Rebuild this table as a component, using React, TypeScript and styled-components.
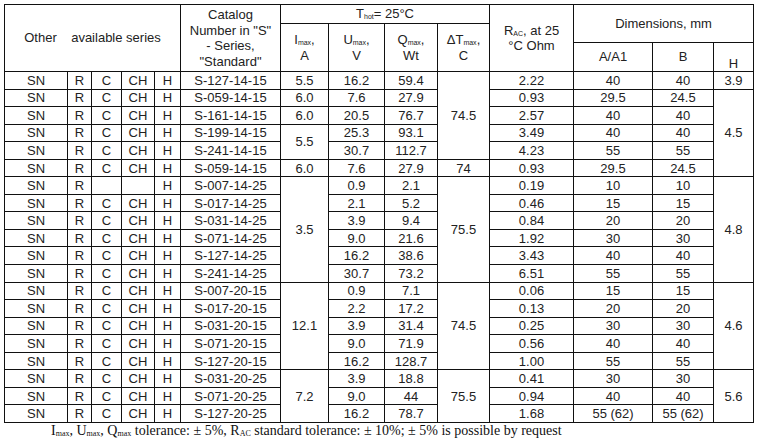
import React from 'react';
import styled, { createGlobalStyle } from 'styled-components';

type Span = [string, number] | null;

interface Row {
  series: [string, string, string, string, string];
  cat: string;
  i: Span;
  u: string;
  q: string;
  dt: Span;
  r: string;
  a: string;
  b: string;
  h: Span;
}

const full: Row['series'] = ['SN', 'R', 'C', 'CH', 'H'];

const rows: Row[] = [
  { series: full, cat: 'S-127-14-15', i: ['5.5', 1], u: '16.2', q: '59.4', dt: ['74.5', 5], r: '2.22', a: '40', b: '40', h: ['3.9', 1] },
  { series: full, cat: 'S-059-14-15', i: ['6.0', 1], u: '7.6', q: '27.9', dt: null, r: '0.93', a: '29.5', b: '24.5', h: ['4.5', 5] },
  { series: full, cat: 'S-161-14-15', i: ['6.0', 1], u: '20.5', q: '76.7', dt: null, r: '2.57', a: '40', b: '40', h: null },
  { series: full, cat: 'S-199-14-15', i: ['5.5', 2], u: '25.3', q: '93.1', dt: null, r: '3.49', a: '40', b: '40', h: null },
  { series: full, cat: 'S-241-14-15', i: null, u: '30.7', q: '112.7', dt: null, r: '4.23', a: '55', b: '55', h: null },
  { series: full, cat: 'S-059-14-15', i: ['6.0', 1], u: '7.6', q: '27.9', dt: ['74', 1], r: '0.93', a: '29.5', b: '24.5', h: null },
  { series: ['SN', 'R', '', '', 'H'], cat: 'S-007-14-25', i: ['3.5', 6], u: '0.9', q: '2.1', dt: ['75.5', 6], r: '0.19', a: '10', b: '10', h: ['4.8', 6] },
  { series: full, cat: 'S-017-14-25', i: null, u: '2.1', q: '5.2', dt: null, r: '0.46', a: '15', b: '15', h: null },
  { series: full, cat: 'S-031-14-25', i: null, u: '3.9', q: '9.4', dt: null, r: '0.84', a: '20', b: '20', h: null },
  { series: full, cat: 'S-071-14-25', i: null, u: '9.0', q: '21.6', dt: null, r: '1.92', a: '30', b: '30', h: null },
  { series: full, cat: 'S-127-14-25', i: null, u: '16.2', q: '38.6', dt: null, r: '3.43', a: '40', b: '40', h: null },
  { series: full, cat: 'S-241-14-25', i: null, u: '30.7', q: '73.2', dt: null, r: '6.51', a: '55', b: '55', h: null },
  { series: full, cat: 'S-007-20-15', i: ['12.1', 5], u: '0.9', q: '7.1', dt: ['74.5', 5], r: '0.06', a: '15', b: '15', h: ['4.6', 5] },
  { series: full, cat: 'S-017-20-15', i: null, u: '2.2', q: '17.2', dt: null, r: '0.13', a: '20', b: '20', h: null },
  { series: full, cat: 'S-031-20-15', i: null, u: '3.9', q: '31.4', dt: null, r: '0.25', a: '30', b: '30', h: null },
  { series: full, cat: 'S-071-20-15', i: null, u: '9.0', q: '71.9', dt: null, r: '0.56', a: '40', b: '40', h: null },
  { series: full, cat: 'S-127-20-15', i: null, u: '16.2', q: '128.7', dt: null, r: '1.00', a: '55', b: '55', h: null },
  { series: full, cat: 'S-031-20-25', i: ['7.2', 3], u: '3.9', q: '18.8', dt: ['75.5', 3], r: '0.41', a: '30', b: '30', h: ['5.6', 3] },
  { series: full, cat: 'S-071-20-25', i: null, u: '9.0', q: '44', dt: null, r: '0.94', a: '40', b: '40', h: null },
  { series: full, cat: 'S-127-20-25', i: null, u: '16.2', q: '78.7', dt: null, r: '1.68', a: '55 (62)', b: '55 (62)', h: null },
];

const widths = [63, 24, 30, 33, 26, 100, 48, 56, 53, 52, 84, 79, 61, 40];

const GlobalStyle = createGlobalStyle`
  body {
    margin: 0;
    background: #fff;
  }
`;

const Page = styled.div`
  padding: 4px 0 0 4px;
  width: 757px;
  height: 439px;
  box-sizing: border-box;
  overflow: hidden;
`;

const Table = styled.table`
  border-collapse: collapse;
  table-layout: fixed;
  width: 749px;
  font-family: 'Liberation Sans', Arial, sans-serif;
  font-size: 13px;
  color: #222;
`;

const HeadRow = styled.tr<{ $h: number }>`
  height: ${(p) => p.$h}px;
`;

const Head = styled.th<{ $align?: 'middle' | 'bottom' }>`
  border: 1px solid #111;
  padding: 0;
  font-weight: normal;
  line-height: 15.5px;
  text-align: center;
  vertical-align: ${(p) => p.$align ?? 'middle'};
  white-space: pre;
`;

const Sub = styled.sub`
  font-size: 7px;
  vertical-align: -1px;
  line-height: 0;
`;

const DataRow = styled.tr`
  height: 17.55px;
`;

const Cell = styled.td`
  border: 1px solid #111;
  padding: 0;
  line-height: 15px;
  text-align: center;
  vertical-align: middle;
  white-space: nowrap;
`;

const Note = styled.p`
  margin: 0 0 0 47px;
  font-family: 'Liberation Serif', 'Times New Roman', serif;
  font-size: 14px;
  color: #111;
  line-height: 16px;
  white-space: nowrap;
`;

const NoteSub = styled.sub`
  font-size: 8px;
  vertical-align: -1px;
  line-height: 0;
`;

const SpanCell: React.FC<{ v: Span }> = ({ v }) =>
  v ? <Cell rowSpan={v[1]}>{v[0]}</Cell> : null;

const App: React.FC = () => {
  return (
    <Page>
      <GlobalStyle />
      <Table>
        <colgroup>
          {widths.map((w, i) => (
            <col key={i} style={{ width: w }} />
          ))}
        </colgroup>
        <thead>
          <HeadRow $h={19}>
            <Head colSpan={5} rowSpan={3}>
              {'Other    available series'}
            </Head>
            <Head rowSpan={3}>
              {'Catalog\nNumber in "S"\n- Series,\n"Standard"'}
            </Head>
            <Head colSpan={4}>
              T<Sub>hot</Sub>= 25°C
            </Head>
            <Head rowSpan={3}>
              R<Sub>AC</Sub>, at 25{'\n'}°C Ohm
            </Head>
            <Head colSpan={3} rowSpan={2}>
              Dimensions, mm
            </Head>
          </HeadRow>
          <HeadRow $h={19}>
            <Head rowSpan={2}>
              I<Sub>max</Sub>,{'\n'}A
            </Head>
            <Head rowSpan={2}>
              U<Sub>max</Sub>,{'\n'}V
            </Head>
            <Head rowSpan={2}>
              Q<Sub>max</Sub>,{'\n'}Wt
            </Head>
            <Head rowSpan={2}>
              ΔT<Sub>max</Sub>,{'\n'}C
            </Head>
          </HeadRow>
          <HeadRow $h={29}>
            <Head>A/A1</Head>
            <Head>B</Head>
            <Head $align='bottom'>H</Head>
          </HeadRow>
        </thead>
        <tbody>
          {rows.map((row, idx) => (
            <DataRow key={idx}>
              {row.series.map((s, k) => (
                <Cell key={k}>{s}</Cell>
              ))}
              <Cell>{row.cat}</Cell>
              <SpanCell v={row.i} />
              <Cell>{row.u}</Cell>
              <Cell>{row.q}</Cell>
              <SpanCell v={row.dt} />
              <Cell>{row.r}</Cell>
              <Cell>{row.a}</Cell>
              <Cell>{row.b}</Cell>
              <SpanCell v={row.h} />
            </DataRow>
          ))}
        </tbody>
      </Table>
      <Note>
        I<NoteSub>max</NoteSub>, U<NoteSub>max</NoteSub>,  Q<NoteSub>max</NoteSub> tolerance: ± 5%, R
        <NoteSub>AC</NoteSub>  standard tolerance: ± 10%; ± 5% is possible by request
      </Note>
    </Page>
  );
};

export default App;
